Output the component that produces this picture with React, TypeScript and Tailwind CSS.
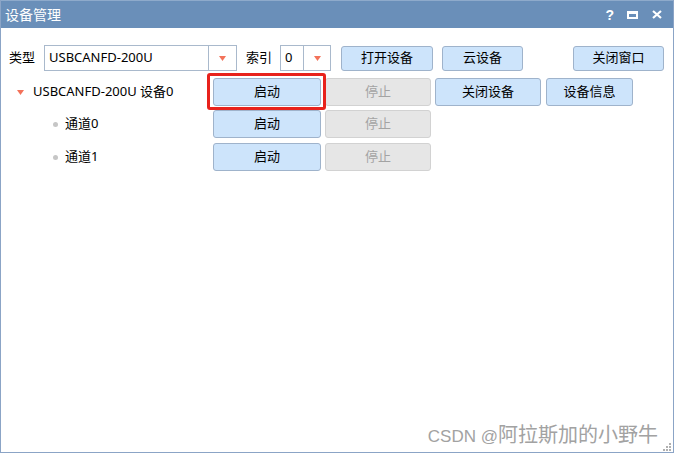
import React from "react";

const btn =
  "h-[28px] rounded-[3px] border border-[#9fb3cb] bg-[#cde4fb] text-[13px] text-black flex items-center justify-center";
const btnOff =
  "h-[28px] rounded-[3px] border border-[#d2d2d2] bg-[#e6e6e6] text-[13px] text-[#a3a3a3] flex items-center justify-center";

function Arrow() {
  return (
    <svg width="7" height="5" viewBox="0 0 7 5">
      <polygon points="0,0 7,0 3.5,5" fill="#f3725a" />
    </svg>
  );
}

function Combo({ w, split, text }: { w: string; split: string; text: string }) {
  return (
    <div className={`${w} h-[26px] border border-[#a9b9cc] bg-white flex`}>
      <div className={`${split} flex items-center pl-[4px] text-[13px] text-black`}>{text}</div>
      <div className="flex-1 border-l border-[#a9b9cc] flex items-center justify-center">
        <Arrow />
      </div>
    </div>
  );
}

export default function App() {
  return (
    <div className="w-[674px] h-[453px] flex flex-col border-x border-b border-[#8ba4c6] bg-white overflow-hidden font-['Noto_Sans','Noto_Sans_CJK_SC',sans-serif]">
      {/* title bar */}
      <div className="h-[28px] shrink-0 bg-[#6a8fb9] border-t border-[#8eaacb] flex items-center pl-[4px] text-white text-[14px]">
        <span className="flex-1">设备管理</span>
        <span className="text-[14px] font-bold leading-none mr-[13px] font-['Liberation_Sans',sans-serif]">?</span>
        <div className="w-[11px] h-[8px] border-2 border-t-[3px] border-white mr-[14px]" />
        <svg width="10" height="9" viewBox="0 0 10 9" className="mr-[11px]">
          <path d="M1 1 L9 8 M9 1 L1 8" stroke="white" strokeWidth="2.2" />
        </svg>
      </div>

      {/* content */}
      <div className="relative flex-1 pt-[17px]">
        {/* row 1 */}
        <div className="flex items-center h-[26px] pl-[8px]">
          <span className="w-[35px] text-[13px] text-black">类型</span>
          <Combo w="w-[193px]" split="w-[163px]" text="USBCANFD-200U" />
          <span className="w-[34px] ml-[9px] text-[13px] text-black">索引</span>
          <Combo w="w-[51px]" split="w-[22px]" text="0" />
          <button className={`${btn} !h-[25px] w-[92px] ml-[10px]`}>打开设备</button>
          <button className={`${btn} !h-[25px] w-[81px] ml-[9px]`}>云设备</button>
          <button className={`${btn} !h-[25px] w-[91px] ml-[50px]`}>关闭窗口</button>
        </div>

        {/* row 2 */}
        <div className="flex items-center h-[28px] mt-[7px]">
          <div className="w-[212px] flex items-center pl-[16px] text-[13px] text-black">
            <Arrow />
            <span className="ml-[9px]">USBCANFD-200U 设备0</span>
          </div>
          <div className="relative">
            <button className={`${btn} w-[108px]`}>启动</button>
            <div className="absolute -left-[6px] -right-[5px] -top-[5px] -bottom-[4px] border-[3px] border-[#e8221c] rounded-[3px]" />
          </div>
          <button className={`${btnOff} w-[106px] ml-[4px]`}>停止</button>
          <button className={`${btn} w-[106px] ml-[4px]`}>关闭设备</button>
          <button className={`${btn} w-[87px] ml-[5px]`}>设备信息</button>
        </div>

        {/* row 3 */}
        <div className="flex items-center h-[28px] mt-[4px]">
          <div className="w-[212px] flex items-center pl-[52px] text-[13px] text-black">
            <div className="w-[5px] h-[5px] rounded-full bg-[#c6c6c6]" />
            <span className="ml-[7px]">通道0</span>
          </div>
          <button className={`${btn} w-[108px]`}>启动</button>
          <button className={`${btnOff} w-[106px] ml-[4px]`}>停止</button>
        </div>

        {/* row 4 */}
        <div className="flex items-center h-[28px] mt-[5px]">
          <div className="w-[212px] flex items-center pl-[52px] text-[13px] text-black">
            <div className="w-[5px] h-[5px] rounded-full bg-[#c6c6c6]" />
            <span className="ml-[7px]">通道1</span>
          </div>
          <button className={`${btn} w-[108px]`}>启动</button>
          <button className={`${btnOff} w-[106px] ml-[4px]`}>停止</button>
        </div>

        {/* watermark */}
        <div className="absolute right-[15px] bottom-[7px] leading-none text-[#a2a2a2] whitespace-nowrap flex items-baseline">
          <span className="text-[17px] font-['Liberation_Sans',sans-serif]">CSDN @</span>
          <span className="text-[20px] font-['Noto_Sans_CJK_SC',sans-serif]">阿拉斯加的小野牛</span>
        </div>

        {/* resize grip */}
        <svg width="9" height="9" viewBox="0 0 9 9" className="absolute right-[2px] bottom-[1px]">
          <rect x="7" y="1" width="2" height="2" fill="#b0b0b0" />
          <rect x="4" y="4" width="2" height="2" fill="#b0b0b0" />
          <rect x="7" y="4" width="2" height="2" fill="#b0b0b0" />
          <rect x="1" y="7" width="2" height="2" fill="#b0b0b0" />
          <rect x="4" y="7" width="2" height="2" fill="#b0b0b0" />
          <rect x="7" y="7" width="2" height="2" fill="#b0b0b0" />
        </svg>
      </div>
    </div>
  );
}
